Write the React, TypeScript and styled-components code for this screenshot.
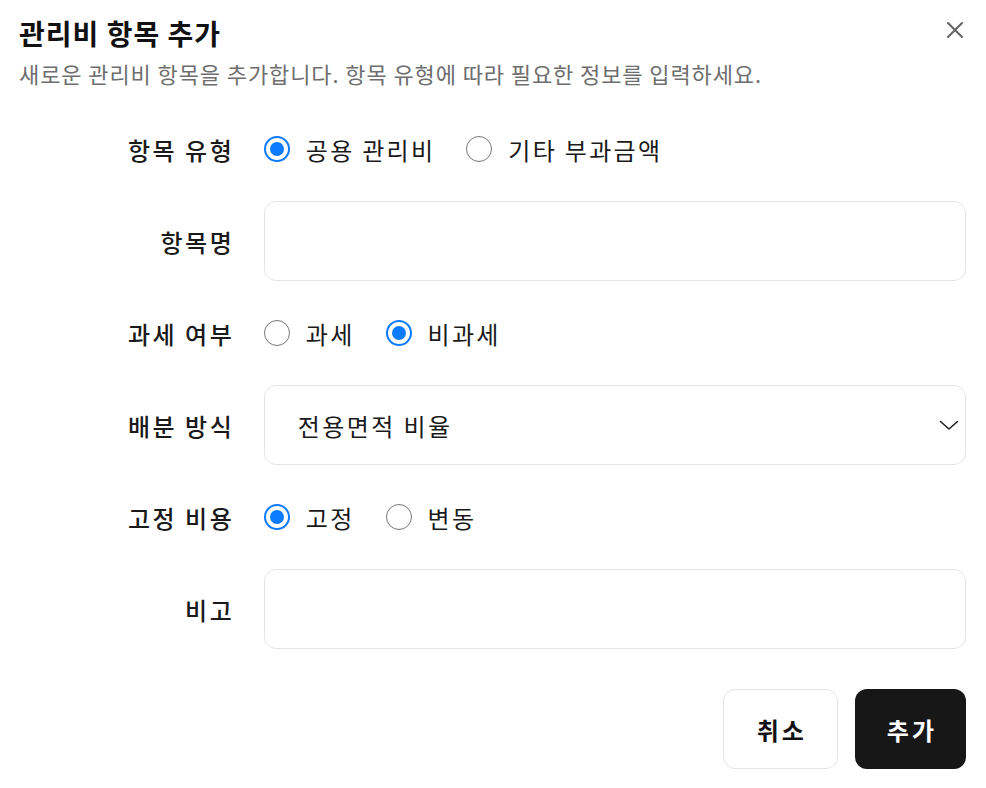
import React, { useState } from 'react';
import styled, { createGlobalStyle } from 'styled-components';

const GlobalStyle = createGlobalStyle`
  html, body {
    margin: 0;
    padding: 0;
    background: #ffffff;
  }
  body {
    font-family: "Noto Sans CJK KR", "Noto Sans", sans-serif;
    color: #1a1a1a;
  }
`;

const Dialog = styled.div`
  position: relative;
  width: 986px;
  height: 788px;
  box-sizing: border-box;
  padding: 14px 20px 18px 19px;
  display: flex;
  flex-direction: column;
`;

const Header = styled.div`
  display: flex;
  flex-direction: column;
  gap: 6px;
`;

const Title = styled.h2`
  margin: 0;
  font-size: 28px;
  line-height: 38px;
  font-weight: 700;
  color: #111;
  letter-spacing: 1px;
`;

const Description = styled.p`
  margin: 0;
  font-size: 22px;
  line-height: 30px;
  color: #6e6e6e;
  letter-spacing: 0.9px;
`;

const CloseButton = styled.button`
  position: absolute;
  top: 16px;
  right: 17px;
  width: 28px;
  height: 28px;
  padding: 0;
  border: none;
  background: none;
  color: #666;
  cursor: pointer;
  display: flex;
  align-items: center;
  justify-content: center;
`;

const Form = styled.div`
  display: flex;
  flex-direction: column;
  gap: 32px;
  padding: 32px 0;
  margin-top: 9px;
`;

const Row = styled.div<{ $tall?: boolean }>`
  display: grid;
  grid-template-columns: repeat(4, 1fr);
  column-gap: 32px;
  align-items: center;
  height: ${p => (p.$tall ? '80px' : '40px')};
`;

const Label = styled.label`
  text-align: right;
  font-size: 24px;
  font-weight: 500;
  color: #1a1a1a;
  letter-spacing: 2.5px;
  margin-right: -2.5px;
`;

const Field = styled.div`
  grid-column: span 3;
  height: 100%;
  display: flex;
  align-items: center;
`;

const RadioGroup = styled.div`
  display: flex;
  align-items: center;
  gap: 31px;
`;

const RadioOption = styled.label`
  display: flex;
  align-items: center;
  gap: 16px;
  font-size: 24px;
  color: #1a1a1a;
  cursor: pointer;
  letter-spacing: 2.3px;
`;

const RadioCircle = styled.span<{ $checked: boolean }>`
  width: 26px;
  height: 26px;
  box-sizing: border-box;
  border-radius: 50%;
  border: ${p => (p.$checked ? '2.5px solid #0b7bff' : '1.5px solid #767676')};
  display: flex;
  align-items: center;
  justify-content: center;
  &::after {
    content: '';
    width: 14px;
    height: 14px;
    border-radius: 50%;
    background: #0b7bff;
    display: ${p => (p.$checked ? 'block' : 'none')};
  }
`;

const TextInput = styled.input`
  width: 100%;
  height: 80px;
  box-sizing: border-box;
  border: 1.5px solid #e4e4e4;
  border-radius: 12px;
  padding: 0 32px;
  font-family: inherit;
  font-size: 24px;
  color: #1a1a1a;
  outline: none;
  background: #fff;
`;

const Select = styled.button`
  width: 100%;
  height: 80px;
  box-sizing: border-box;
  border: 1.5px solid #e4e4e4;
  border-radius: 12px;
  padding: 0 4px 0 33px;
  font-family: inherit;
  font-size: 24px;
  color: #1a1a1a;
  background: #fff;
  display: flex;
  align-items: center;
  justify-content: space-between;
  letter-spacing: 2.4px;
  cursor: pointer;
`;

const Footer = styled.div`
  display: flex;
  justify-content: flex-end;
  gap: 17px;
  margin-top: 8px;
`;

const Button = styled.button<{ $primary?: boolean }>`
  height: 80px;
  padding: 0 ${p => (p.$primary ? '29px' : '30px')} 0 ${p => (p.$primary ? '32px' : '33px')};
  box-sizing: border-box;
  border-radius: 12px;
  border: ${p => (p.$primary ? 'none' : '1.5px solid #e4e4e4')};
  background: ${p => (p.$primary ? '#171717' : '#ffffff')};
  color: ${p => (p.$primary ? '#ffffff' : '#111111')};
  font-family: inherit;
  font-size: 24px;
  font-weight: 700;
  letter-spacing: 3px;
  cursor: pointer;
`;

type Option = { value: string; label: string };

const Radios: React.FC<{ options: Option[]; value: string; onChange: (v: string) => void }> = ({
  options,
  value,
  onChange,
}) => (
  <RadioGroup>
    {options.map(o => (
      <RadioOption key={o.value} onClick={() => onChange(o.value)}>
        <RadioCircle $checked={value === o.value} />
        {o.label}
      </RadioOption>
    ))}
  </RadioGroup>
);

const App: React.FC = () => {
  const [type, setType] = useState('common');
  const [tax, setTax] = useState('exempt');
  const [fixed, setFixed] = useState('fixed');

  return (
    <>
      <GlobalStyle />
      <Dialog>
        <Header>
          <Title>관리비 항목 추가</Title>
          <Description>새로운 관리비 항목을 추가합니다. 항목 유형에 따라 필요한 정보를 입력하세요.</Description>
        </Header>
        <CloseButton aria-label="닫기">
          <svg width="28" height="28" viewBox="0 0 24 24" fill="none" stroke="currentColor" strokeWidth="1.8" strokeLinecap="round">
            <path d="M18 6 6 18" />
            <path d="m6 6 12 12" />
          </svg>
        </CloseButton>

        <Form>
          <Row>
            <Label>항목 유형</Label>
            <Field>
              <Radios
                value={type}
                onChange={setType}
                options={[
                  { value: 'common', label: '공용 관리비' },
                  { value: 'extra', label: '기타 부과금액' },
                ]}
              />
            </Field>
          </Row>
          <Row $tall>
            <Label>항목명</Label>
            <Field>
              <TextInput />
            </Field>
          </Row>
          <Row>
            <Label>과세 여부</Label>
            <Field>
              <Radios
                value={tax}
                onChange={setTax}
                options={[
                  { value: 'taxable', label: '과세' },
                  { value: 'exempt', label: '비과세' },
                ]}
              />
            </Field>
          </Row>
          <Row $tall>
            <Label>배분 방식</Label>
            <Field>
              <Select>
                <span>전용면적 비율</span>
                <svg width="24" height="24" viewBox="0 0 24 24" fill="none" stroke="#222" strokeWidth="1.6" strokeLinecap="round" strokeLinejoin="round">
                  <path d="M3.5 8.5 12 16l8.5-7.5" />
                </svg>
              </Select>
            </Field>
          </Row>
          <Row>
            <Label>고정 비용</Label>
            <Field>
              <Radios
                value={fixed}
                onChange={setFixed}
                options={[
                  { value: 'fixed', label: '고정' },
                  { value: 'variable', label: '변동' },
                ]}
              />
            </Field>
          </Row>
          <Row $tall>
            <Label>비고</Label>
            <Field>
              <TextInput />
            </Field>
          </Row>
        </Form>

        <Footer>
          <Button>취소</Button>
          <Button $primary>추가</Button>
        </Footer>
      </Dialog>
    </>
  );
};

export default App;
